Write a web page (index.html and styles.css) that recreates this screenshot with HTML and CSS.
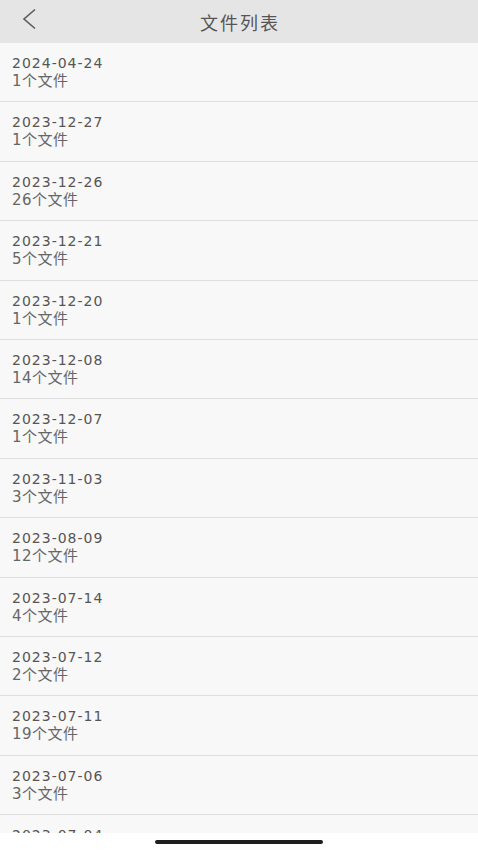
FILE: index.html
```html
<!DOCTYPE html>
<html lang="zh">

<head>
    <meta charset="UTF-8">
    <meta name="viewport" content="width=device-width, initial-scale=1.0">
    <title>文件列表</title>
    <link rel="stylesheet" href="styles.css">
</head>

<body>
    <div class="screen">
        <div class="header">
            <svg class="back" width="16" height="22" viewBox="0 0 16 22">
                <path d="M14 1.5 L3 11 L14 20.5" fill="none" stroke="#5a5a5a" stroke-width="1.6" />
            </svg>
            <div class="title">文件列表</div>
        </div>
        <div class="list">
            <div class="row"><div class="date">2024-04-24</div><div class="count">1个文件</div></div>
            <div class="row"><div class="date">2023-12-27</div><div class="count">1个文件</div></div>
            <div class="row"><div class="date">2023-12-26</div><div class="count">26个文件</div></div>
            <div class="row"><div class="date">2023-12-21</div><div class="count">5个文件</div></div>
            <div class="row"><div class="date">2023-12-20</div><div class="count">1个文件</div></div>
            <div class="row"><div class="date">2023-12-08</div><div class="count">14个文件</div></div>
            <div class="row"><div class="date">2023-12-07</div><div class="count">1个文件</div></div>
            <div class="row"><div class="date">2023-11-03</div><div class="count">3个文件</div></div>
            <div class="row"><div class="date">2023-08-09</div><div class="count">12个文件</div></div>
            <div class="row"><div class="date">2023-07-14</div><div class="count">4个文件</div></div>
            <div class="row"><div class="date">2023-07-12</div><div class="count">2个文件</div></div>
            <div class="row"><div class="date">2023-07-11</div><div class="count">19个文件</div></div>
            <div class="row"><div class="date">2023-07-06</div><div class="count">3个文件</div></div>
            <div class="row"><div class="date">2023-07-04</div><div class="count">2个文件</div></div>
        </div>
        <div class="home-bar">
            <div class="indicator"></div>
        </div>
    </div>
</body>

</html>
```

FILE: styles.css
```css
body {
    margin: 0;
    font-family: "DejaVu Sans", "Noto Sans CJK SC", sans-serif;
    background-color: rgb(255, 255, 255);
}

.screen {
    display: flex;
    flex-direction: column;
    height: 850px;
    overflow: hidden;
}

.header {
    height: 43px;
    flex-shrink: 0;
    display: flex;
    align-items: center;
    justify-content: center;
    position: relative;
    background-color: rgb(230, 229, 229);
}

.back {
    position: absolute;
    left: 21px;
    top: 8px;
}

.title {
    font-family: "Noto Sans CJK SC", sans-serif;
    font-size: 18px;
    letter-spacing: 2px;
    color: rgb(85, 85, 85);
    margin-left: 2px;
}

.list {
    flex: 1;
    overflow: hidden;
    background-color: rgb(248, 248, 248);
}

.row {
    height: 58.42px;
    box-sizing: content-box;
    padding: 0 12px;
    border-bottom: 1px solid rgb(222, 222, 222);
}

.date {
    padding-top: 11px;
    font-size: 14px;
    line-height: 18px;
    letter-spacing: 1px;
    color: rgb(85, 85, 85);
}

.count {
    font-size: 15px;
    line-height: 18px;
    letter-spacing: 0.5px;
    color: rgb(102, 102, 102);
}

.home-bar {
    height: 17px;
    flex-shrink: 0;
    display: flex;
    justify-content: center;
    padding-top: 7px;
    box-sizing: border-box;
    background-color: rgb(255, 255, 255);
}

.indicator {
    width: 168px;
    height: 4px;
    border-radius: 2px;
    background-color: rgb(30, 30, 30);
}
```
